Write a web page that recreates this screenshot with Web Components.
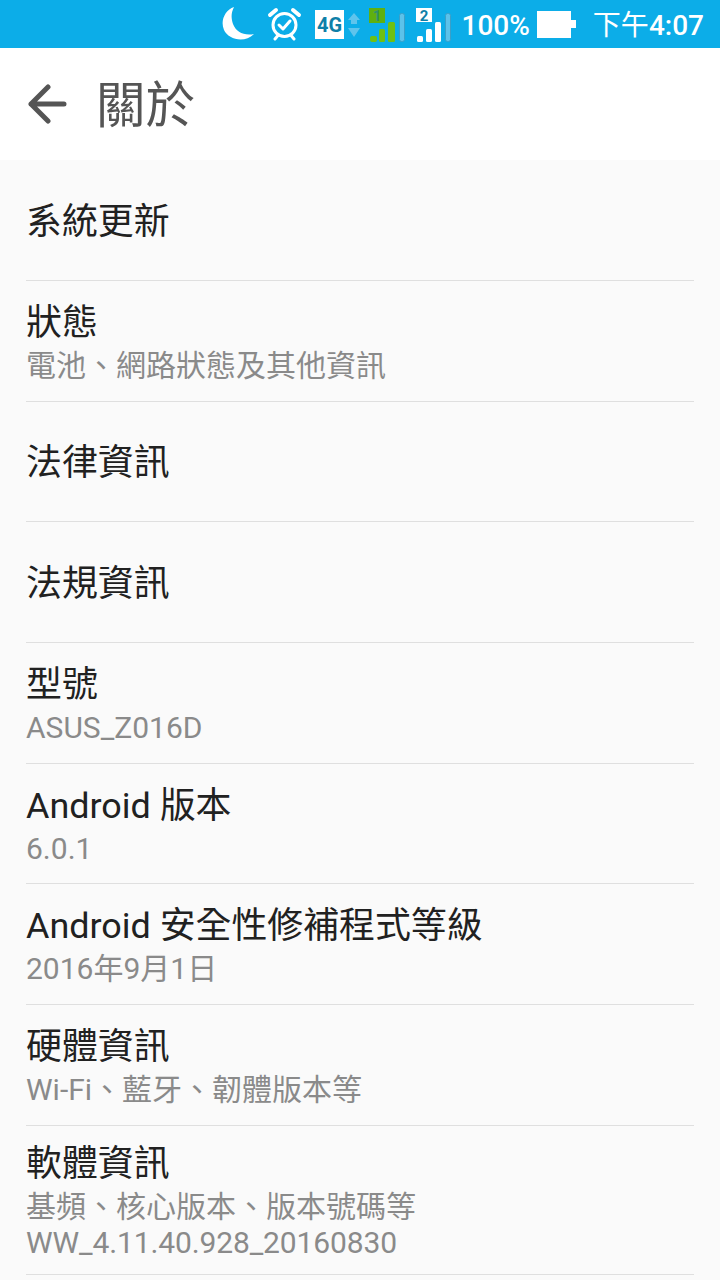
<!DOCTYPE html>
<html lang="zh-Hant">
<head>
<meta charset="utf-8">
<title>關於</title>
<style>
  html, body { margin: 0; padding: 0; background: #fafafa; }
  body { width: 720px; height: 1280px; overflow: hidden; font-family: Roboto, "Noto Sans CJK TC", sans-serif; }
</style>
</head>
<body>
<status-bar></status-bar>
<title-bar>關於</title-bar>
<settings-list>
  <setting-row h="121">系統更新</setting-row>
  <setting-row h="121">狀態<span slot="sub">電池、網路狀態及其他資訊</span></setting-row>
  <setting-row h="120">法律資訊</setting-row>
  <setting-row h="121">法規資訊</setting-row>
  <setting-row h="121">型號<span slot="sub">ASUS_Z016D</span></setting-row>
  <setting-row h="120">Android 版本<span slot="sub">6.0.1</span></setting-row>
  <setting-row h="121">Android 安全性修補程式等級<span slot="sub">2016年9月1日</span></setting-row>
  <setting-row h="121">硬體資訊<span slot="sub">Wi-Fi、藍牙、韌體版本等</span></setting-row>
  <setting-row h="149">軟體資訊<span slot="sub">基頻、核心版本、版本號碼等<br><span style="letter-spacing:-.12px">WW_4.11.40.928_20160830</span></span></setting-row>
</settings-list>
<script>
class StatusBar extends HTMLElement {
  constructor() {
    super();
    this.attachShadow({ mode: 'open' });
    this.shadowRoot.innerHTML = `
      <style>
        :host { display: flex; align-items: center; justify-content: flex-end; height: 48px; background: #0cade8; color: #fff; padding-right: 16px; box-sizing: border-box; }
        svg { display: block; flex: none; }
        .pct, .time { font-size: 28px; line-height: 48px; padding-top: 3px; white-space: nowrap; font-weight: 500; }
        .pct { margin-left: 10px; }
        .time { margin-left: 17px; }
        .time i { font-style: normal; font-weight: 400; }
        .moon { margin-right: 12px; }
        .alarm { margin-right: 13px; }
        .net { margin-right: 9px; }
        .sig { margin-top: 2px; }
        .sig1 { margin-right: 11px; }
        .batt { margin-left: 7px; }
      </style>
      <svg class="moon" width="34" height="34" viewBox="0 0 34 34"><path fill="#fff" d="M13 0C4 3-1 14 3 23c4 9 20 14 30 4 -10 2-18-2-21-10C10 11 10 6 13 0z"/></svg>
      <svg class="alarm" width="35" height="34" viewBox="0 0 35 34" fill="none" stroke="#fff" stroke-linecap="round" stroke-linejoin="round"><circle cx="17.500" cy="18" r="11.500" stroke-width="3"/><path stroke-width="3" d="M12 18l4 4 7-8"/><path stroke-width="4" d="M3 8l6-5M32 8l-6-5"/><path stroke-width="3" d="M8 32l2.500-3M27 32l-2.500-3"/></svg>
      <svg class="net" width="45" height="29" viewBox="0 0 45 29"><rect x="0" y="0" width="29" height="29" fill="#fff"/><text x="14.500" y="22" text-anchor="middle" font-family="Roboto, sans-serif" font-weight="700" font-size="20" fill="#0f7fa8">4G</text><path fill="#5fc4ec" d="M39 3l6 7h-3v4h-6v-4h-3zM33 18h12l-6 9z"/></svg>
      <svg class="sig sig1" width="36" height="34" viewBox="0 0 36 34"><rect x="0" y="0" width="16" height="15" fill="#5fb010"/><text x="8" y="13" text-anchor="middle" font-family="Roboto, sans-serif" font-weight="700" font-size="15" fill="#2f8f6a">1</text><rect x="1" y="28" width="7" height="6" rx="2" fill="#6fc013"/><rect x="10" y="21" width="6" height="13" rx="1.500" fill="#6fc013"/><rect x="19" y="14" width="7" height="20" rx="1.500" fill="#6fc013"/><rect x="30.500" y="5.500" width="5" height="28" rx="2" fill="#5cc2ea" stroke="#3a9fc8"/></svg>
      <svg class="sig" width="36" height="34" viewBox="0 0 36 34"><rect x="0" y="0" width="16" height="14" fill="#fff"/><text x="8" y="12.500" text-anchor="middle" font-family="Roboto, sans-serif" font-weight="700" font-size="15" fill="#0f7fa8">2</text><rect x="1" y="28" width="6" height="6" rx="1.500" fill="#fff"/><rect x="10" y="21" width="6" height="13" rx="1.500" fill="#fff"/><rect x="19" y="14" width="6" height="20" rx="1.500" fill="#fff"/><rect x="29.500" y="5.500" width="5" height="28" rx="2" fill="#5cc2ea" stroke="#3a9fc8"/></svg>
      <span class="pct">100%</span>
      <svg class="batt" width="39" height="27" viewBox="0 0 39 27"><path fill="#fff" d="M0 0h34v9h5v8h-5v10H0z"/></svg>
      <span class="time"><i>下午</i>4:07</span>
    `;
  }
}

class TitleBar extends HTMLElement {
  constructor() {
    super();
    this.attachShadow({ mode: 'open' });
    this.shadowRoot.innerHTML = `
      <style>
        :host { display: flex; align-items: center; height: 112px; background: #fff; color: #555; padding-left: 28px; box-sizing: border-box; }
        svg { display: block; flex: none; margin-right: 28px; }
        .t { font-size: 49.500px; line-height: 112px; padding-top: 3px; }
      </style>
      <svg width="40" height="40" viewBox="0 0 40 40" fill="none" stroke="#555" stroke-width="5" stroke-linecap="round" stroke-linejoin="round"><path d="M3 20h33M20 3L3 20l17 17"/></svg>
      <span class="t"><slot></slot></span>
    `;
  }
}

class SettingsList extends HTMLElement {
  constructor() {
    super();
    this.attachShadow({ mode: 'open' });
    this.shadowRoot.innerHTML = `
      <style>
        :host { display: block; padding: 0 26px; background: #fafafa; }
      </style>
      <slot></slot>
    `;
  }
}

class SettingRow extends HTMLElement {
  constructor() {
    super();
    this.attachShadow({ mode: 'open' });
    this.shadowRoot.innerHTML = `
      <style>
        :host { display: flex; flex-direction: column; justify-content: center; box-sizing: border-box; border-bottom: 1px solid #dfdfdf; padding-top: 3px; }
        .t { font-size: 35.900px; line-height: 44px; color: #212121; }
        .s { font-size: 30px; line-height: 36px; color: #8a8a8a; margin-top: 3px; }
      </style>
      <div class="t"><slot></slot></div>
      <div class="s"><slot name="sub"></slot></div>
    `;
  }
  connectedCallback() {
    this.style.height = this.getAttribute('h') + 'px';
    if (!this.querySelector('[slot=sub]')) {
      this.shadowRoot.querySelector('.s').style.display = 'none';
    }
  }
}

customElements.define('status-bar', StatusBar);
customElements.define('title-bar', TitleBar);
customElements.define('settings-list', SettingsList);
customElements.define('setting-row', SettingRow);
</script>
</body>
</html>
